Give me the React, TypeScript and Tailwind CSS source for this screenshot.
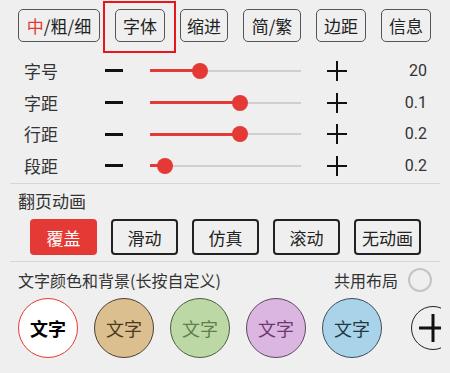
import React from "react";

const font = { fontFamily: '"Noto Sans CJK SC", "Noto Sans", sans-serif' };

function TopBtn({ children, w }: { children: React.ReactNode; w: string }) {
  return (
    <div className={`h-[33px] ${w} flex items-center justify-center rounded-[5px] border-[1.5px] border-[#555] text-[17px] text-[#222]`}>
      {children}
    </div>
  );
}

function SliderRow({ label, pos, value }: { label: string; pos: number; value: string }) {
  return (
    <div className="flex h-[31.7px] items-center">
      <div className="w-[105px] shrink-0 pl-[24px] text-[17px] text-[#333]">{label}</div>
      <div className="flex w-[45px] shrink-0 items-center">
        <div className="h-[3px] w-[18px] bg-[#111]" />
      </div>
      <div className="relative h-[16px] w-[151px] shrink-0">
        <div className="absolute left-0 right-0 top-[7px] h-[2px] bg-[#cfcfcf]" />
        <div className="absolute left-0 top-[6.5px] h-[3px] bg-[#e53935]" style={{ width: pos }} />
        <div
          className="absolute top-0 h-[16px] w-[16px] rounded-full bg-[#e53935]"
          style={{ left: pos - 8 }}
        />
      </div>
      <div className="flex w-[50px] shrink-0 items-center justify-start pl-[26px]">
        <svg width="20" height="20" viewBox="0 0 20 20">
          <path d="M0 10H20M10 0V20" stroke="#111" strokeWidth="2" />
        </svg>
      </div>
      <div className="flex-1 pr-[23px] text-right text-[16px] text-[#333]" style={{ fontFamily: "Roboto, sans-serif" }}>
        {value}
      </div>
    </div>
  );
}

function AnimBtn({ children, active }: { children: React.ReactNode; active?: boolean }) {
  return active ? (
    <div className="flex h-[36px] w-[67px] items-center justify-center rounded-[4px] bg-[#e53935] text-[17px] text-white">
      {children}
    </div>
  ) : (
    <div className="flex h-[36px] w-[67px] items-center justify-center rounded-[4px] border-2 border-[#222] text-[17px] text-[#222]">
      {children}
    </div>
  );
}

function ColorCircle({ bg, border, color, bold }: { bg: string; border: string; color: string; bold?: boolean }) {
  return (
    <div className={`flex h-[60px] w-[60px] shrink-0 items-center justify-center rounded-full border-[1.5px] ${bg} ${border} ${color} ${bold ? "font-bold" : ""} text-[18px]`}>
      文字
    </div>
  );
}

export default function App() {
  return (
    <div className="relative h-[373px] w-[450px] overflow-hidden bg-[#efefef]" style={font}>
      {/* top row */}
      <div className="relative flex gap-[15px] pl-[18px] pt-[9px]">
        <TopBtn w="w-[82px]">
          <span className="text-[#e53935]">中</span>/粗/细
        </TopBtn>
        <div className="relative">
          <TopBtn w="w-[50px]">字体</TopBtn>
          <div className="absolute left-[-12px] top-[-8px] h-[52px] w-[73px] border-2 border-[#e8161c]" />
        </div>
        <TopBtn w="w-[48px]">缩进</TopBtn>
        <TopBtn w="w-[58px]">简/繁</TopBtn>
        <TopBtn w="w-[50px]">边距</TopBtn>
        <TopBtn w="w-[50px]">信息</TopBtn>
      </div>

      {/* sliders */}
      <div className="mt-[13px] flex flex-col">
        <SliderRow label="字号" pos={50} value="20" />
        <SliderRow label="字距" pos={90} value="0.1" />
        <SliderRow label="行距" pos={90} value="0.2" />
        <SliderRow label="段距" pos={15} value="0.2" />
      </div>

      <div className="mx-[10px] mt-[1px] h-[1px] bg-[#d6d6d6]" />

      <div className="pl-[18px] pt-[4px] text-[17px] text-[#333]">翻页动画</div>

      <div className="mt-[6px] flex gap-[14px] pl-[30px]">
        <AnimBtn active>覆盖</AnimBtn>
        <AnimBtn>滑动</AnimBtn>
        <AnimBtn>仿真</AnimBtn>
        <AnimBtn>滚动</AnimBtn>
        <AnimBtn>无动画</AnimBtn>
      </div>

      <div className="mx-[10px] mt-[6px] h-[1px] bg-[#d6d6d6]" />

      <div className="flex items-center justify-between pl-[18px] pr-[18px] pt-[6px]">
        <div className="text-[16px] text-[#333]">文字颜色和背景(长按自定义)</div>
        <div className="flex items-center gap-[10px]">
          <span className="text-[16px] text-[#333]">共用布局</span>
          <div className="h-[24px] w-[24px] rounded-full border-2 border-[#c4c4c4]" />
        </div>
      </div>

      <div className="mt-[6px] flex w-[441px] items-center gap-[16px] overflow-hidden pl-[18px]">
        <ColorCircle bg="bg-white" border="border-[#e53935]" color="text-black" bold />
        <ColorCircle bg="bg-[#dcbf8e]" border="border-[#4a4036]" color="text-[#4a3a22]" />
        <ColorCircle bg="bg-[#bcd9a5]" border="border-[#4e5a46]" color="text-[#5f7d4f]" />
        <ColorCircle bg="bg-[#dab6e0]" border="border-[#5a4a5c]" color="text-[#6e3a70]" />
        <ColorCircle bg="bg-[#a9d3e8]" border="border-[#3e4e58]" color="text-[#253746]" />
        <div className="ml-[13px] flex h-[44px] w-[44px] shrink-0 items-center justify-center rounded-full border-[1.5px] border-[#222]">
          <svg width="28" height="28" viewBox="0 0 28 28">
            <path d="M0 14H28M14 0V28" stroke="#111" strokeWidth="3" />
          </svg>
        </div>
      </div>
    </div>
  );
}
